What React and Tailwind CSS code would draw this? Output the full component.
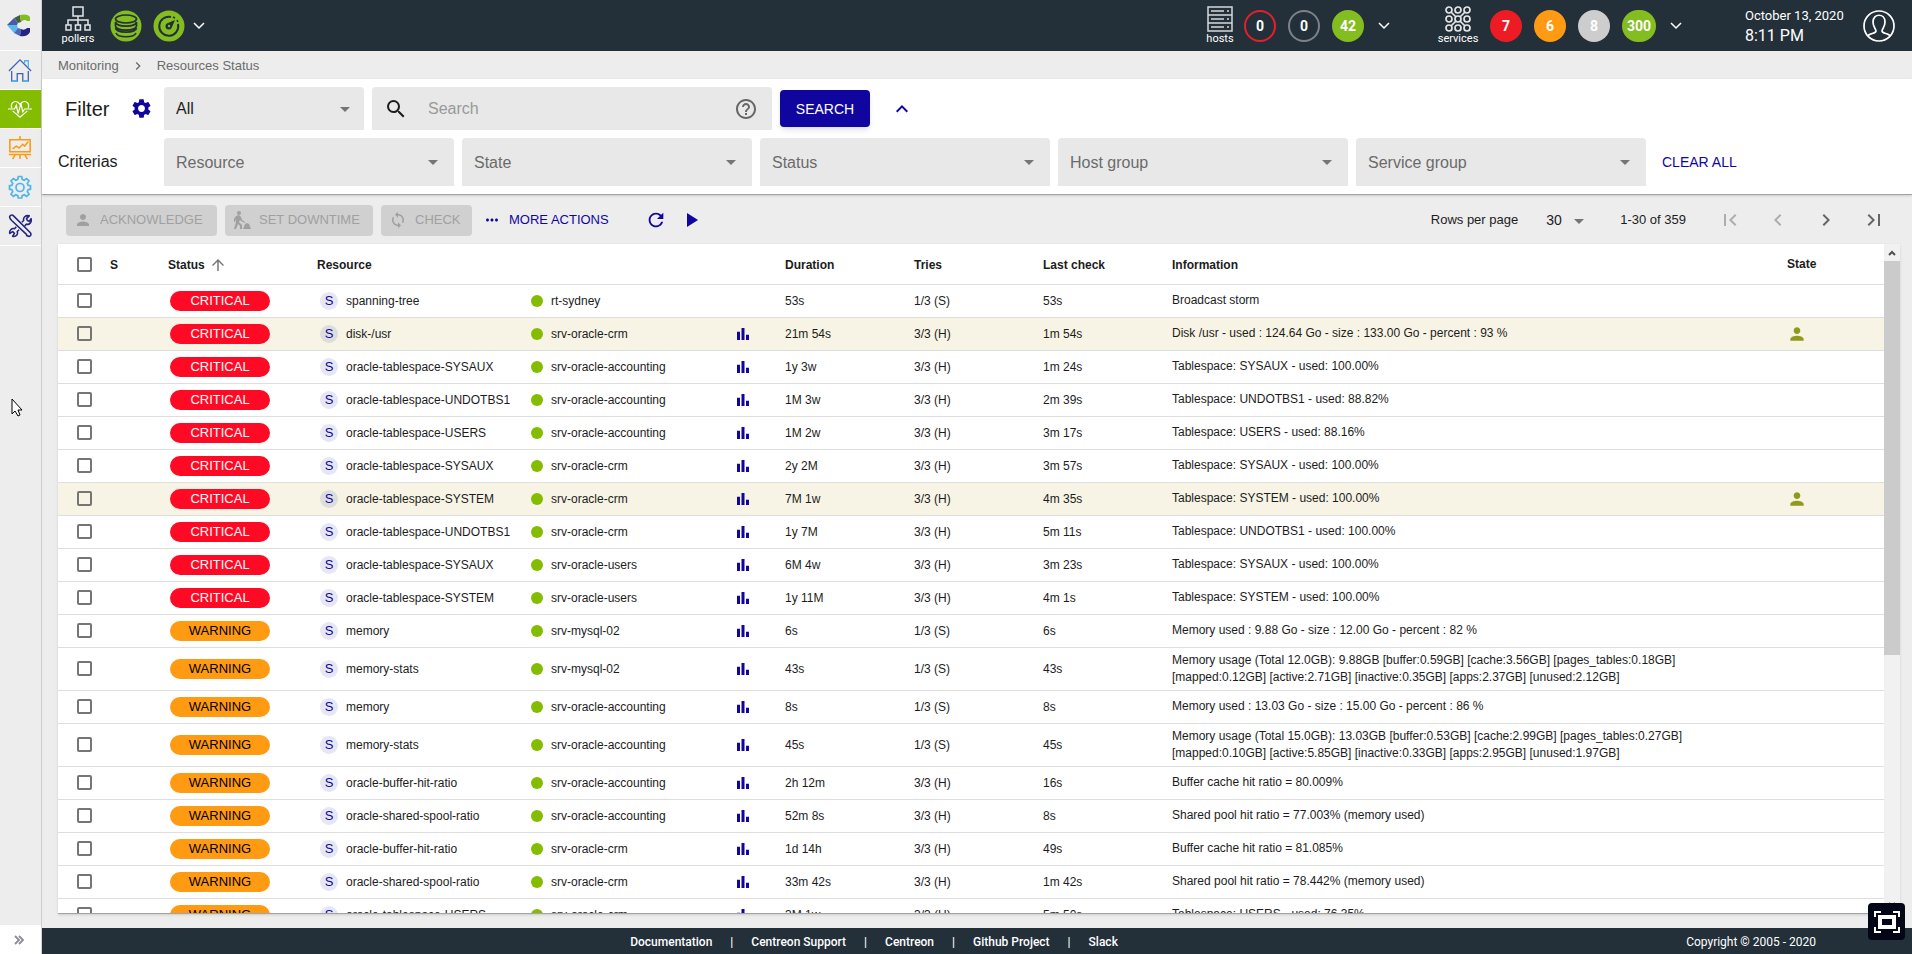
import { MdSettings, MdSearch, MdHelpOutline, MdKeyboardArrowUp, MdPerson, MdSync, MdMoreHoriz, MdRefresh, MdPlayArrow, MdFirstPage, MdLastPage, MdChevronLeft, MdChevronRight, MdArrowUpward, MdArrowDropDown, MdBarChart } from 'react-icons/md'
import clsx from 'clsx'

const CRITERIAS = ['Resource', 'State', 'Status', 'Host group', 'Service group']

const ROWS = [
  ['CRITICAL', 'spanning-tree', 'rt-sydney', '53s', '1/3 (S)', '53s', 'Broadcast storm'],
  ['CRITICAL', 'disk-/usr', 'srv-oracle-crm', '21m 54s', '3/3 (H)', '1m 54s', 'Disk /usr - used : 124.64 Go - size : 133.00 Go - percent : 93 %'],
  ['CRITICAL', 'oracle-tablespace-SYSAUX', 'srv-oracle-accounting', '1y 3w', '3/3 (H)', '1m 24s', 'Tablespace: SYSAUX - used: 100.00%'],
  ['CRITICAL', 'oracle-tablespace-UNDOTBS1', 'srv-oracle-accounting', '1M 3w', '3/3 (H)', '2m 39s', 'Tablespace: UNDOTBS1 - used: 88.82%'],
  ['CRITICAL', 'oracle-tablespace-USERS', 'srv-oracle-accounting', '1M 2w', '3/3 (H)', '3m 17s', 'Tablespace: USERS - used: 88.16%'],
  ['CRITICAL', 'oracle-tablespace-SYSAUX', 'srv-oracle-crm', '2y 2M', '3/3 (H)', '3m 57s', 'Tablespace: SYSAUX - used: 100.00%'],
  ['CRITICAL', 'oracle-tablespace-SYSTEM', 'srv-oracle-crm', '7M 1w', '3/3 (H)', '4m 35s', 'Tablespace: SYSTEM - used: 100.00%'],
  ['CRITICAL', 'oracle-tablespace-UNDOTBS1', 'srv-oracle-crm', '1y 7M', '3/3 (H)', '5m 11s', 'Tablespace: UNDOTBS1 - used: 100.00%'],
  ['CRITICAL', 'oracle-tablespace-SYSAUX', 'srv-oracle-users', '6M 4w', '3/3 (H)', '3m 23s', 'Tablespace: SYSAUX - used: 100.00%'],
  ['CRITICAL', 'oracle-tablespace-SYSTEM', 'srv-oracle-users', '1y 11M', '3/3 (H)', '4m 1s', 'Tablespace: SYSTEM - used: 100.00%'],
  ['WARNING', 'memory', 'srv-mysql-02', '6s', '1/3 (S)', '6s', 'Memory used : 9.88 Go - size : 12.00 Go - percent : 82 %'],
  ['WARNING', 'memory-stats', 'srv-mysql-02', '43s', '1/3 (S)', '43s', 'Memory usage (Total 12.0GB): 9.88GB [buffer:0.59GB] [cache:3.56GB] [pages_tables:0.18GB]\n[mapped:0.12GB] [active:2.71GB] [inactive:0.35GB] [apps:2.37GB] [unused:2.12GB]'],
  ['WARNING', 'memory', 'srv-oracle-accounting', '8s', '1/3 (S)', '8s', 'Memory used : 13.03 Go - size : 15.00 Go - percent : 86 %'],
  ['WARNING', 'memory-stats', 'srv-oracle-accounting', '45s', '1/3 (S)', '45s', 'Memory usage (Total 15.0GB): 13.03GB [buffer:0.53GB] [cache:2.99GB] [pages_tables:0.27GB]\n[mapped:0.10GB] [active:5.85GB] [inactive:0.33GB] [apps:2.95GB] [unused:1.97GB]'],
  ['WARNING', 'oracle-buffer-hit-ratio', 'srv-oracle-accounting', '2h 12m', '3/3 (H)', '16s', 'Buffer cache hit ratio = 80.009%'],
  ['WARNING', 'oracle-shared-spool-ratio', 'srv-oracle-accounting', '52m 8s', '3/3 (H)', '8s', 'Shared pool hit ratio = 77.003% (memory used)'],
  ['WARNING', 'oracle-buffer-hit-ratio', 'srv-oracle-crm', '1d 14h', '3/3 (H)', '49s', 'Buffer cache hit ratio = 81.085%'],
  ['WARNING', 'oracle-shared-spool-ratio', 'srv-oracle-crm', '33m 42s', '3/3 (H)', '1m 42s', 'Shared pool hit ratio = 78.442% (memory used)'],
  ['WARNING', 'oracle-tablespace-USERS', 'srv-oracle-crm', '3M 1w', '3/3 (H)', '5m 50s', 'Tablespace: USERS - used: 76.35%'],
]

const ACKNOWLEDGED = [1, 6]
const FOOTER_LINKS = ['Documentation', 'Centreon Support', 'Centreon', 'Github Project', 'Slack']

function Logo() {
  return (
    <svg viewBox="0 0 24 24" className="size-6">
      <path d="M7 5l6-3 1 7-3 1z" fill="#44603f" />
      <path d="M13 2c4-1 8-1 10 2v4h-3c-2-2-4-1-6 1z" fill="#84bd1f" />
      <path d="M0 12l7-7 4 5-1 2z" fill="#4a5aa8" />
      <path d="M0 12h10l1 3-4 5z" fill="#5cb8ea" />
      <path d="M7 20l4-5 3 1-1 7z" fill="#4a66c0" />
      <path d="M13 23l1-7c2 1 4 1 6-1h3v4c-2 4-6 5-10 4z" fill="#262480" />
    </svg>
  )
}

function HomeIcon() {
  return (
    <svg viewBox="0 0 26 26" className="size-6" fill="none" stroke="#3f62b5" strokeWidth="1.4">
      <path d="M1 14L13 2l12 12" />
      <path d="M18 6V3h4v7" stroke="#4db5ea" />
      <path d="M4 14v11h6v-8h6v8h6V14" />
      <path d="M4 25h6M16 25h6" stroke="#4db5ea" strokeWidth="2" />
    </svg>
  )
}

function HeartIcon() {
  return (
    <svg viewBox="0 0 26 26" className="size-6" fill="none" stroke="#fff" strokeWidth="1.3">
      <path d="M4 12c-2-8 6-9 9-4 3-5 11-4 9 4M5 15l8 7 8-7" />
      <path d="M0 13h7l2-4 2 9 3-11 2 9 2-3h8" />
    </svg>
  )
}

function BoardIcon() {
  return (
    <svg viewBox="0 0 26 26" className="size-6" fill="none" stroke="#ff9a13" strokeWidth="1.7">
      <path d="M2 4h22v13H2zM13 0v4M1 20h24M8 20l-3 5M18 20l3 5M13 20v5" />
      <path d="M5 14l4-3 3 2 4-4 2 2 4-5" />
    </svg>
  )
}

function GearIcon() {
  return (
    <svg viewBox="0 0 24 24" className="size-6" fill="none" stroke="#4db5ea" strokeWidth="1.7">
      {/* eight teeth around the hub */}
      <path d="M10.3 1.5h3.4l.5 2.9 2 .8 2.4-1.7L21 5.900l-1.700 2.400.8 2 2.400.5v3.400l-2.400.5-.8 2L21 19.100l-2.400 2.400-2.400-1.700-2 .8-.5 2.400h-3.400l-.5-2.400-2-.8-2.400 1.700L3 19.100l1.700-2.400-.8-2-2.400-.5v-3.400l2.400-.5.8-2L3 5.900l2.400-2.400 2.400 1.700 2-.8z" />
      <circle cx="12" cy="12.500" r="4" />
    </svg>
  )
}

function ToolsIcon() {
  return (
    <svg viewBox="0 0 26 26" className="size-6" fill="none" stroke="#262480" strokeWidth="1.7" strokeLinejoin="round">
      <path d="M2 4c-1-2 2-4 4-2l18 18c2 2 0 5-2 4-1 0-2-1-2-2L4 7C3 6 2 5 2 4z" />
      <path d="M15 9l2-2c-1-3 2-6 6-5l-3 3 1 2 2 1 2-3c1 4-2 7-5 6l-2 2M9 14l-2 2c-3-1-6 2-5 5l3-2 2 2-2 3c4 1 6-2 5-5l2-2" />
    </svg>
  )
}

function PollersIcon() {
  return (
    <svg viewBox="0 0 26 26" className="size-[26px]" fill="none" stroke="#e4e6e8" strokeWidth="1.5">
      <path d="M8 1h10v9H8zM13 10v9M3 19v-5h20v5M1 19h5v5H1zM10.500 19h5v5h-5zM20 19h5v5h-5z" />
    </svg>
  )
}

function HostsIcon() {
  return (
    <svg viewBox="0 0 26 26" className="size-[26px]" fill="none" stroke="#d6d9dc" strokeWidth="1.5">
      <path d="M1 1h24v24H1zM1 9h24M1 17h24M4 5h13M4 13h13M4 21h13M20 5h2M20 13h2M20 21h2" />
    </svg>
  )
}

function ServicesIcon() {
  return (
    <svg viewBox="0 0 26 26" className="size-[26px]" fill="none" stroke="#e4e6e8" strokeWidth="1.7">
      {[4, 13, 22].map((y) => [4, 13, 22].map((x) => <circle key={`${x}-${y}`} cx={x} cy={y} r="3" />))}
      <path d="M6 6l5 5M20 6l-5 5M6 20l5-5M20 20l-5-5" />
    </svg>
  )
}

function DatabaseIcon() {
  return (
    <svg viewBox="0 0 32 32" className="size-8">
      <circle cx="16" cy="16" r="15.5" fill="#84bd1f" />
      <g fill="none" stroke="#232f39" strokeWidth="1.7">
        <ellipse cx="16" cy="9" rx="10.5" ry="4" />
        <path d="M5.500 12c1 5.500 20 5.500 21 0v4c-1 5.500-20 5.500-21 0zM5.500 18c1 5.500 20 5.500 21 0M6 23c2 5 18 5 20 0" />
      </g>
    </svg>
  )
}

function LatencyIcon() {
  return (
    <svg viewBox="0 0 32 32" className="size-8">
      <circle cx="16" cy="16" r="15.5" fill="#84bd1f" />
      <path d="M18 7a9.500 9.500 0 1 0 7 7" fill="none" stroke="#232f39" strokeWidth="2" />
      <path d="M20 7l2 1M24 10l1 2" fill="none" stroke="#232f39" strokeWidth="1.5" />
      <path d="M22 10l-3 7a3.300 3.300 0 1 1-4-4z" fill="#232f39" />
      <circle cx="16" cy="16" r="1.200" fill="#84bd1f" />
    </svg>
  )
}

function UserIcon() {
  return (
    <svg viewBox="0 0 34 34" className="size-[34px]" fill="none" stroke="#fff" strokeWidth="1.7">
      <circle cx="17" cy="17" r="15" />
      <path d="M6 27c1-3 8-2 8-5 0-2-3-4-3-9 0-9 12-9 12 0 0 5-3 7-3 9 0 3 7 2 8 5" />
    </svg>
  )
}

function DowntimeIcon() {
  return (
    <svg viewBox="0 0 18 18" className="size-[18px] shrink-0" fill="currentColor">
      <circle cx="6" cy="2" r="2" />
      <path d="M3 5l3-1 2 2 1 3 3 2v1L8 10 7 9l-1 2 3 3v4H7v-3l-2-2-2 5H1l2-7V8l-1 3H1V8z" />
      <path d="M10 18l2-5 2-1 2 1 2 5z" />
    </svg>
  )
}

function Chevron() {
  return (
    <svg viewBox="0 0 12 8" className="h-2 w-3" fill="none" stroke="currentColor" strokeWidth="1.5">
      <path d="M1 1l5 5 5-5" />
    </svg>
  )
}

const NAV = [
  { label: 'Home', Icon: HomeIcon },
  { label: 'Monitoring', Icon: HeartIcon, active: true },
  { label: 'Reporting', Icon: BoardIcon },
  { label: 'Configuration', Icon: GearIcon },
  { label: 'Administration', Icon: ToolsIcon },
]

function Sidebar() {
  return (
    <nav className="flex w-[42px] shrink-0 flex-col border-r border-[#cfcfcf] bg-[#ededed]">
      <a href="#" aria-label="Centreon" className="flex h-[51px] items-center justify-center border-b border-white pr-1"><Logo /></a>
      {NAV.map(({ label, Icon, active }) => (
        <a key={label} href="#" aria-label={label} className={clsx('flex h-[39px] items-center justify-center border-b border-white pr-px', active && 'bg-[#84bd00]')}>
          <Icon />
        </a>
      ))}
      <button aria-label="Expand menu" className="mt-auto flex h-[29px] items-center justify-center bg-white pr-1 text-[#8a8a94]">
        <svg viewBox="0 0 10 10" className="size-[10px]" fill="none" stroke="currentColor" strokeWidth="1.8"><path d="M1 1l4 4-4 4M5 1l4 4-4 4" /></svg>
      </button>
    </nav>
  )
}

function Bubble({ value, className }) {
  return (
    <a href="#" className={clsx('flex h-8 min-w-8 items-center justify-center rounded-full text-sm font-bold text-white', className)}>{value}</a>
  )
}

function TopBar() {
  return (
    <header className="flex h-[51px] shrink-0 items-center bg-[#232f39] pr-4 pl-5 font-[Roboto,sans-serif] text-white">
      <div className="flex w-8 flex-col items-center text-[11px] leading-[14px]"><PollersIcon />pollers</div>
      <a href="#" aria-label="Database" className="ml-4"><DatabaseIcon /></a>
      <a href="#" aria-label="Latency" className="ml-[11px]"><LatencyIcon /></a>
      <button aria-label="Pollers menu" className="ml-2"><Chevron /></button>

      <div className="ml-auto flex w-8 flex-col items-center text-[11px] leading-[14px]"><HostsIcon />hosts</div>
      <div className="ml-2 flex gap-3">
        <Bubble value="0" className="border-2 border-[#e5202b]" />
        <Bubble value="0" className="border-2 border-[#7d8288]" />
        <Bubble value="42" className="bg-[#84bd1f]" />
      </div>
      <button aria-label="Hosts menu" className="ml-[14px]"><Chevron /></button>

      <div className="ml-12 flex w-10 flex-col items-center text-[11px] leading-[14px]"><ServicesIcon />services</div>
      <div className="ml-3 flex gap-3">
        <Bubble value="7" className="bg-[#ed1c24]" />
        <Bubble value="6" className="bg-[#ff9a13]" />
        <Bubble value="8" className="bg-[#cdcdcd]" />
        <Bubble value="300" className="w-[34px] bg-[#84bd1f]" />
      </div>
      <button aria-label="Services menu" className="ml-[14px]"><Chevron /></button>

      <div className="ml-[63px] w-[101px] text-[13px] leading-5 whitespace-nowrap">October 13, 2020<div className="text-base leading-5">8:11 PM</div></div>
      <button aria-label="User profile" className="ml-4"><UserIcon /></button>
    </header>
  )
}

function Filters() {
  return (
    <section className="flex shrink-0 flex-col gap-2 border-b border-[#a3a3a3] bg-white py-2 pl-4 shadow-sm">
      <div className="flex items-center">
        <h1 className="w-[72px] pl-[7px] text-xl">Filter</h1>
        <button aria-label="Edit filters" className="text-[#10069f]"><MdSettings size={23} /></button>
        <div className="relative ml-[11px] w-[200px]">
          <select aria-label="Filter" className="h-[43px] w-full appearance-none rounded-t bg-[#e8e8e8] pl-3 text-base"><option>All</option></select>
          <MdArrowDropDown size={24} className="pointer-events-none absolute top-[10px] right-[7px] text-[#757575]" />
        </div>
        <label className="ml-2 flex h-[43px] w-[400px] items-center rounded-t bg-[#e8e8e8] pr-[14px] pl-3">
          <MdSearch size={24} />
          <input aria-label="Search" placeholder="Search" className="ml-5 min-w-0 flex-1 text-base outline-none placeholder:text-[#999]" />
          <MdHelpOutline size={24} className="text-[#666]" />
        </label>
        <button className="ml-2 h-[37px] w-[90px] rounded bg-[#10069f] text-sm text-white shadow-md">SEARCH</button>
        <button aria-label="Hide criterias" className="ml-5 text-[#10069f]"><MdKeyboardArrowUp size={24} /></button>
      </div>
      <div className="flex items-center gap-2">
        <h2 className="w-[98px] text-base">Criterias</h2>
        {CRITERIAS.map((name) => (
          <div key={name} className="relative w-[290px]">
            <select aria-label={name} className="h-12 w-full appearance-none rounded-t bg-[#e8e8e8] pt-[2px] pl-3 text-base text-[#6b6b6b]"><option>{name}</option></select>
            <MdArrowDropDown size={24} className="pointer-events-none absolute top-3 right-[9px] text-[#757575]" />
          </div>
        ))}
        <button className="ml-2 text-sm text-[#10069f]">CLEAR ALL</button>
      </div>
    </section>
  )
}

function Toolbar() {
  const disabled = 'flex h-[31px] items-center rounded bg-[#d0d0d0] pl-2 text-[13px] whitespace-nowrap text-[#a0a0a0]'
  return (
    <div className="flex h-[49px] shrink-0 items-center pt-px pr-[14px] pl-2">
      <div className="flex gap-2">
        <button disabled className={clsx(disabled, 'w-[151px] gap-2')}><MdPerson size={18} />ACKNOWLEDGE</button>
        <button disabled className={clsx(disabled, 'w-[148px] gap-2')}><DowntimeIcon />SET DOWNTIME</button>
        <button disabled className={clsx(disabled, 'w-[91px] gap-2')}><MdSync size={18} />CHECK</button>
        <button className="flex h-[31px] items-center gap-2 pl-[3px] text-[13px] text-[#10069f]"><MdMoreHoriz size={18} />MORE ACTIONS</button>
      </div>
      <button aria-label="Refresh" className="ml-9 text-[#10069f]"><MdRefresh size={22} /></button>
      <button aria-label="Enable autorefresh" className="ml-3 text-[#10069f]"><MdPlayArrow size={24} /></button>

      <div className="ml-auto flex items-center text-[13px]">
        <label htmlFor="rows">Rows per page</label>
        <div className="relative ml-7">
          <select id="rows" className="w-11 appearance-none text-sm"><option>30</option></select>
          <MdArrowDropDown size={24} className="pointer-events-none absolute -top-px -right-px text-[#757575]" />
        </div>
        <span className="ml-[30px]">1-30 of 359</span>
        <div className="ml-8 flex gap-6 text-[#666]">
          <button disabled aria-label="First page" className="text-[#adadad]"><MdFirstPage size={24} /></button>
          <button disabled aria-label="Previous page" className="text-[#adadad]"><MdChevronLeft size={24} /></button>
          <button aria-label="Next page"><MdChevronRight size={24} /></button>
          <button aria-label="Last page"><MdLastPage size={24} /></button>
        </div>
      </div>
    </div>
  )
}

function Checkbox({ label }) {
  return <input type="checkbox" aria-label={label} className="mx-auto block size-[15px] appearance-none rounded-xs border-2 border-[#757575]" />
}

function ResourceTable() {
  return (
    <div className="flex min-h-0 flex-1 border-b border-[#a3a3a3] bg-white shadow-sm">
      <div className="min-w-0 flex-1 overflow-x-hidden overflow-y-auto [scrollbar-width:none]">
        <table className="w-full table-fixed border-collapse text-left text-xs">
          <colgroup>
            <col className="w-[52px]" />
            <col className="w-[58px]" />
            <col className="w-[149px]" />
            <col className="w-[214px]" />
            <col className="w-[191px]" />
            <col className="w-[63px]" />
            <col className="w-[129px]" />
            <col className="w-[129px]" />
            <col className="w-[129px]" />
            <col />
            <col className="w-[97px]" />
          </colgroup>
          <thead>
            <tr className="h-10 border-b border-[#dedede]">
              <th className="pt-[2px]"><Checkbox label="Select all" /></th>
              <th className="pt-[2px]">S</th>
              <th className="pt-[2px]"><span className="flex items-center gap-1">Status <MdArrowUpward size={18} className="text-[#777]" /></span></th>
              <th className="pt-[2px]">Resource</th>
              <th />
              <th />
              <th className="pt-[2px]">Duration</th>
              <th className="pt-[2px]">Tries</th>
              <th className="pt-[2px]">Last check</th>
              <th className="pt-[2px]">Information</th>
              <th>State</th>
            </tr>
          </thead>
          <tbody>
            {ROWS.map(([status, name, host, duration, tries, lastCheck, info], i) => {
              const acknowledged = ACKNOWLEDGED.includes(i)
              return (
                <tr key={i} className={clsx('h-[33px] border-b border-[#dedede]', acknowledged && 'bg-[#f7f4e5]')}>
                  <td><Checkbox label={`Select ${name} on ${host}`} /></td>
                  <td />
                  <td>
                    <span className={clsx('ml-[2px] flex h-5 w-[100px] items-center justify-center rounded-full text-[13px]', status === 'CRITICAL' ? 'bg-[#ff0a25] text-white' : 'bg-[#ff9a13] text-black')}>{status}</span>
                  </td>
                  <td>
                    <div className="flex items-center gap-2 pl-[3px] whitespace-nowrap">
                      <span className={clsx('flex size-[18px] shrink-0 items-center justify-center rounded-full text-[13px] text-[#10069f]', acknowledged ? 'bg-[#dddddd]' : 'bg-[#e6e6f4]')}>S</span>
                      {name}
                    </div>
                  </td>
                  <td><div className="flex items-center gap-2"><span className="size-3 rounded-full bg-[#84bd00]" />{host}</div></td>
                  <td>{i > 0 && <MdBarChart size={18} className="ml-3 text-[#10069f]" />}</td>
                  <td>{duration}</td>
                  <td>{tries}</td>
                  <td>{lastCheck}</td>
                  <td className="py-1 leading-[17px] whitespace-pre">{info}</td>
                  <td>{acknowledged && <MdPerson size={20} className="text-[#8f9a1c]" />}</td>
                </tr>
              )
            })}
          </tbody>
        </table>
      </div>
      {/* Scroll bar */}
      <div className="flex w-4 shrink-0 flex-col items-center bg-[#f1f1f1] text-[#505050]">
        <div className="flex h-[17px] items-center"><svg viewBox="0 0 8 6" className="h-[6px] w-2" fill="none" stroke="currentColor" strokeWidth="2"><path d="M1 5l3-3 3 3" /></svg></div>
        <div className="h-[394px] w-full bg-[#cbcbcb]" />
        <div className="mt-auto flex h-[17px] items-center"><svg viewBox="0 0 8 6" className="h-[6px] w-2" fill="none" stroke="currentColor" strokeWidth="2"><path d="M1 1l3 3 3-3" /></svg></div>
      </div>
    </div>
  )
}

function Footer() {
  return (
    <footer className="flex h-[26px] shrink-0 items-center bg-[#232f39] pr-24 pl-5 font-[Roboto,sans-serif] text-xs font-medium text-white">
      <ul className="flex flex-1 justify-center pt-[2px]">
        {FOOTER_LINKS.map((link, i) => (
          <li key={link} className={clsx(i > 0 && "before:mx-[18px] before:content-['|']")}><a href="#">{link}</a></li>
        ))}
      </ul>
      <span className="pt-[2px] font-normal">Copyright © 2005 - 2020</span>
    </footer>
  )
}

export default function App() {
  return (
    <div className="flex h-screen overflow-hidden bg-[#ededed] font-['Liberation_Sans',Arial,sans-serif] text-[#1c1c1c]">
      <Sidebar />
      <div className="flex min-w-0 flex-1 flex-col">
        <TopBar />
        <div className="flex h-7 shrink-0 items-center gap-[11px] pt-px pl-4 text-[13px] text-[#6b6b6b]">
          <a href="#">Monitoring</a>
          <MdChevronRight size={16} />
          <a href="#">Resources Status</a>
        </div>
        <Filters />
        <main className="flex min-h-0 flex-1 flex-col pr-3 pb-[14px] pl-4">
          <Toolbar />
          <ResourceTable />
        </main>
        <Footer />
      </div>

      {/* Fullscreen toggle */}
      <button aria-label="Fullscreen" className="fixed right-[7px] bottom-[14px] flex size-[37px] items-center justify-center rounded bg-[#020617]">
        <svg viewBox="0 0 26 22" className="h-[22px] w-[26px]" fill="none" stroke="#fff" strokeWidth="2">
          <path d="M1 6V1h6M19 1h6v5M25 16v5h-6M7 21H1v-5" />
          <path d="M6 6h14v10H6z" strokeWidth="4" />
        </svg>
      </button>

      {/* Mouse pointer */}
      <svg viewBox="0 0 12 19" className="fixed top-[398px] left-[11px] h-[19px] w-3" fill="#fff" stroke="#000">
        <path d="M1 1v15l3-3 3 5 2-1-2-5h4z" />
      </svg>
    </div>
  )
}
